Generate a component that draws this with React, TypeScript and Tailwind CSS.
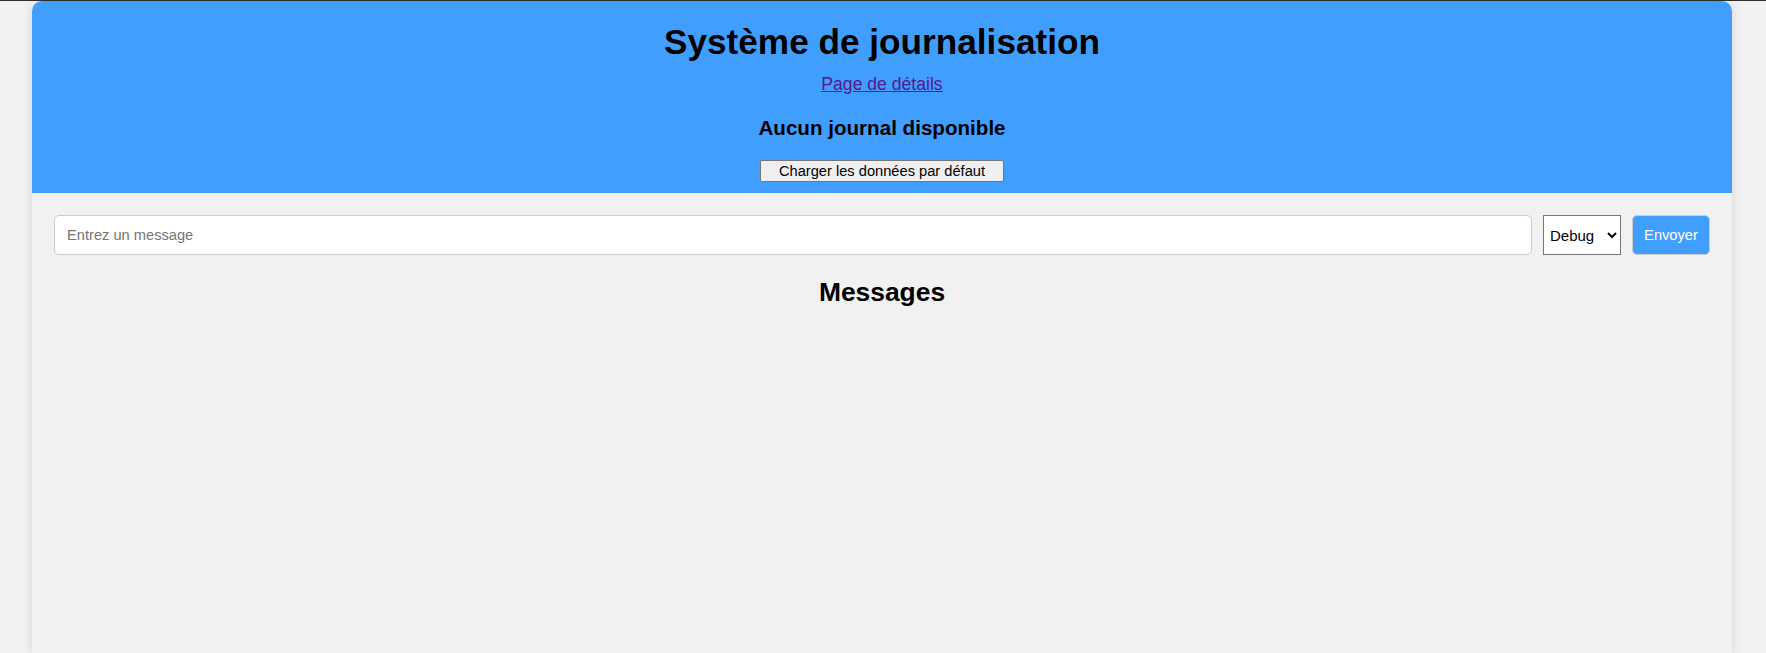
import React from "react";

export default function App() {
  return (
    <div
      className="min-h-[653px] w-full bg-[#f2f2f2] text-black"
      style={{ fontFamily: '"Liberation Sans", Arial, sans-serif' }}
    >
      <div className="h-px w-full bg-[#2e2e2e]" />
      <div className="ml-[32px] flex min-h-[652px] w-[1700px] flex-col rounded-t-[10px] bg-[#f1f1f1] shadow-[0_0_12px_rgba(0,0,0,0.12)]">
        <header className="flex h-[192px] flex-col items-center rounded-t-[10px] bg-[#409eff] pt-[21px] text-center">
          <h1 className="m-0 text-[35.2px] font-bold leading-[40px]">Système de journalisation</h1>
          <a href="#" className="mt-[12px] text-[17.6px] leading-[20px] text-[#551a8b] underline">
            Page de détails
          </a>
          <h3 className="mt-[21.5px] text-[20.6px] font-bold leading-[24px]">Aucun journal disponible</h3>
          <button
            type="button"
            className="mt-[20.7px] h-[22px] rounded-[2px] border border-[#767676] bg-[#efefef] px-[18px] text-[14.67px] leading-[17px] text-black"
          >
            Charger les données par défaut
          </button>
        </header>
        <main className="flex flex-col px-[22px] pt-[22px]">
          <div className="flex h-[40px] items-stretch">
            <input
              type="text"
              placeholder="Entrez un message"
              className="min-w-0 flex-1 rounded-[5px] border border-[#cccccc] bg-white px-[12px] pt-px text-[14.67px] text-black outline-none placeholder:text-[#757575]"
            />
            <select
              defaultValue="Debug"
              className="ml-[11px] w-[78px] rounded-none border border-[#767676] bg-white pl-[2px] text-[15px] text-black"
            >
              <option>Debug</option>
              <option>Info</option>
              <option>Warning</option>
              <option>Error</option>
            </select>
            <button
              type="button"
              className="ml-[11px] w-[78px] rounded-[5px] border border-[#cccccc] bg-[#409eff] text-[14.67px] text-white"
            >
              Envoyer
            </button>
          </div>
          <h2 className="mt-[22px] text-center text-[26.4px] font-bold leading-[30px]">Messages</h2>
        </main>
      </div>
    </div>
  );
}
